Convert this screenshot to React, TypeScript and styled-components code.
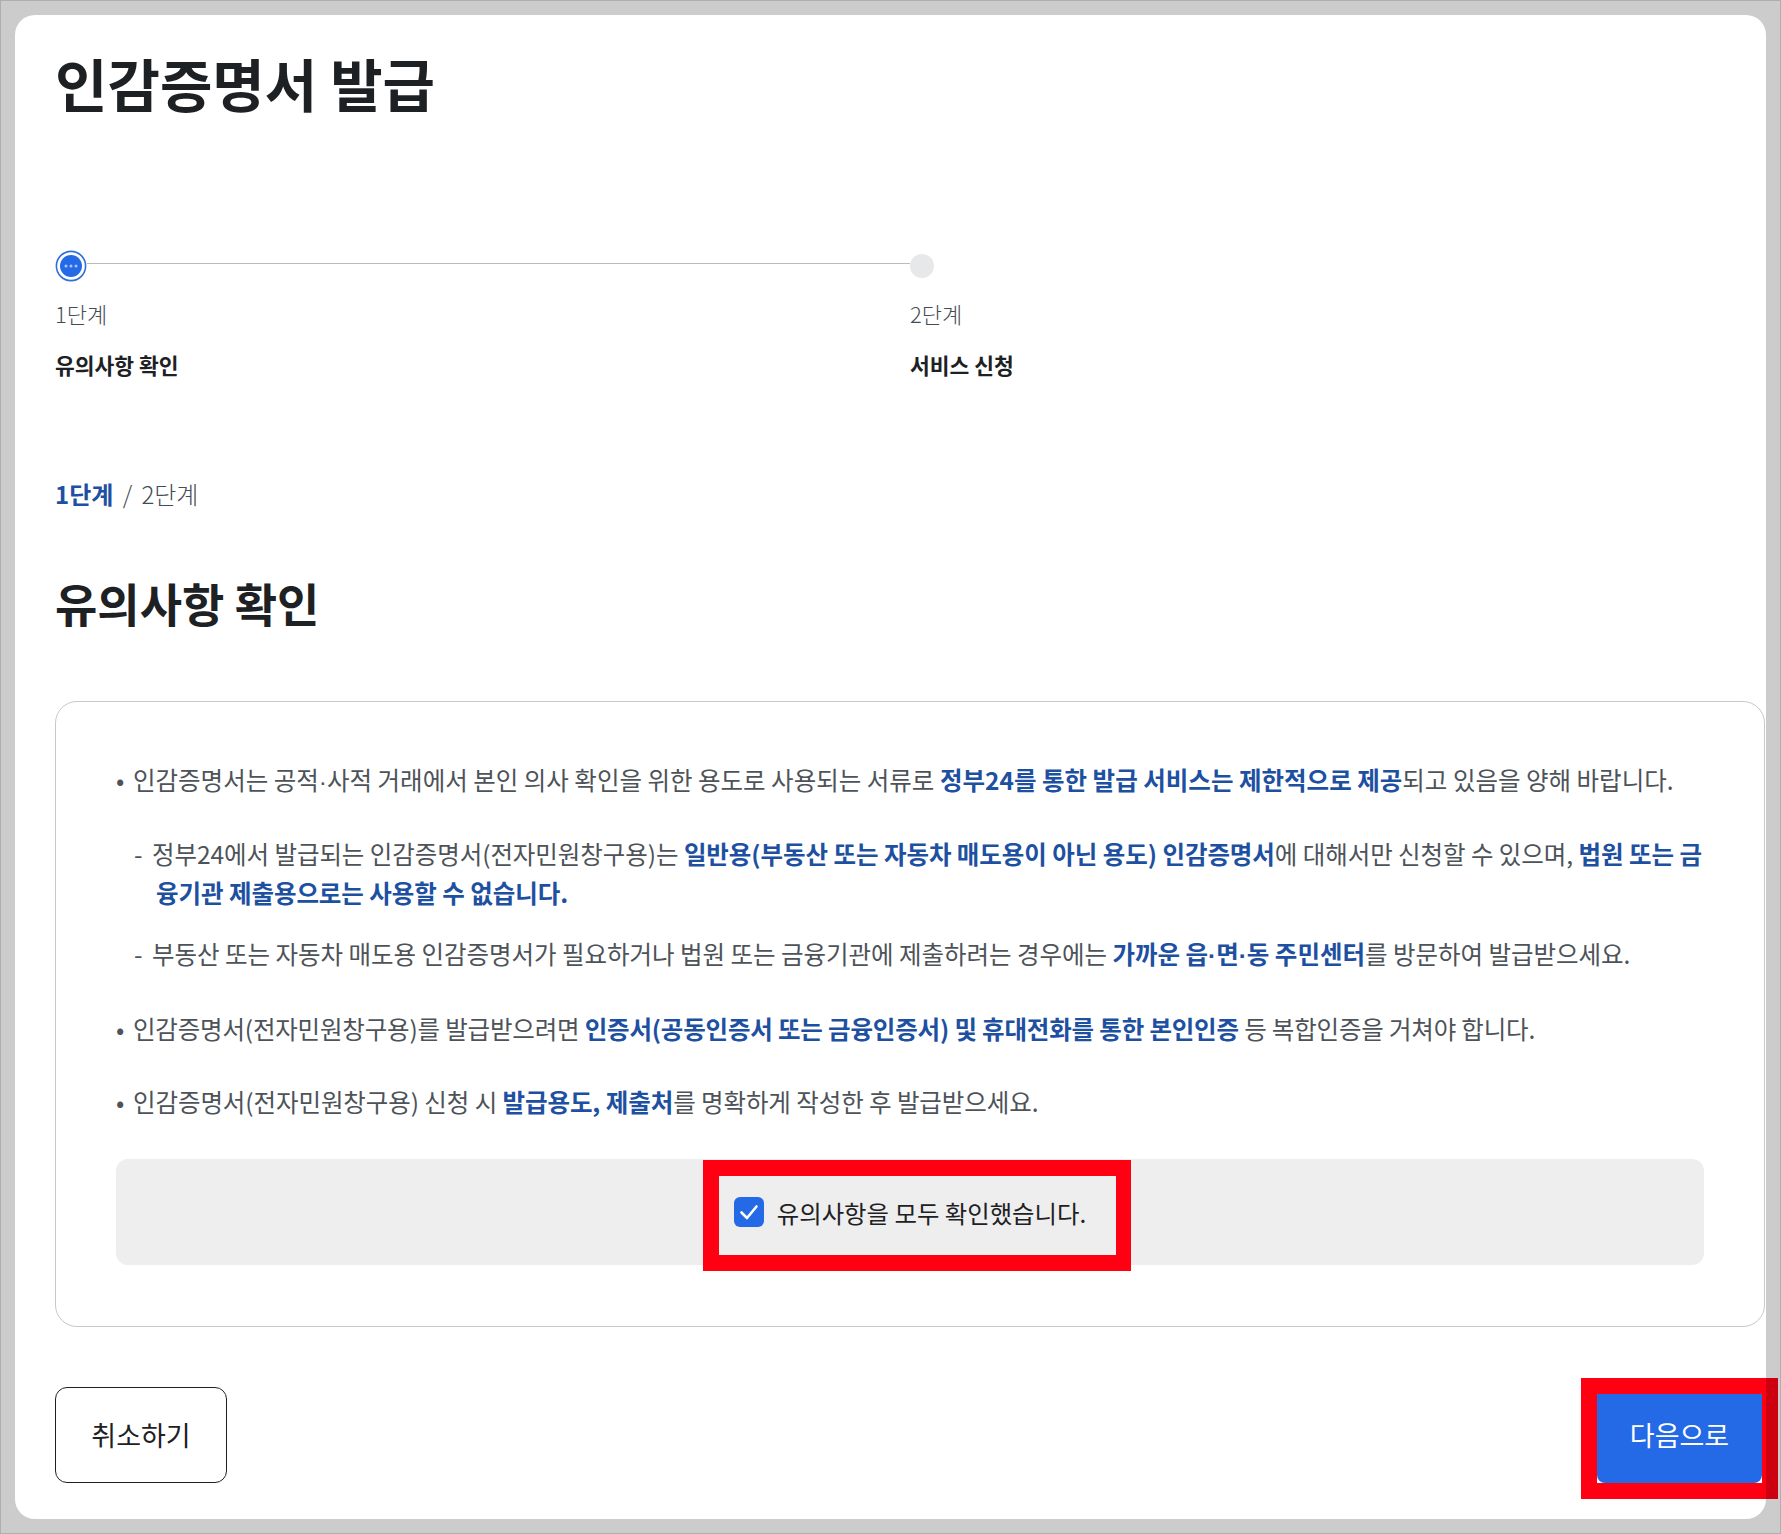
import styled, { createGlobalStyle } from 'styled-components';

const GlobalStyle = createGlobalStyle`
  html, body {
    margin: 0;
    padding: 0;
    background: #cccccc;
  }
  * {
    box-sizing: border-box;
  }
  body {
    font-family: "Noto Sans CJK KR", "Noto Sans", sans-serif;
    color: #1e2124;
  }
`;

const Page = styled.div`
  position: relative;
  width: 1781px;
  height: 1534px;
  padding: 14px;
  background: #cccccc;
  border: 1px solid #aeaeae;
  overflow: hidden;
`;

const Panel = styled.main`
  height: 1504px;
  padding: 0 0 0 40px;
  background: #ffffff;
  border-radius: 20px;
`;

const Title = styled.h1`
  margin: 0;
  padding-top: 27px;
  font-size: 57px;
  line-height: 80px;
  font-weight: 700;
`;

const Stepper = styled.ol`
  display: flex;
  margin: 128px 0 0;
  padding: 0;
  list-style: none;
`;

const Step = styled.li<{ $wide?: boolean }>`
  width: ${(p) => (p.$wide ? '855px' : '200px')};
`;

const MarkerRow = styled.div`
  display: flex;
  align-items: center;
  height: 32px;
`;

const Rail = styled.div`
  flex: 1;
  height: 1px;
  margin-top: -6px;
  background: #b9bdc2;
`;

const IdleDot = styled.span`
  width: 24px;
  height: 24px;
  border-radius: 50%;
  background: #e6e8ea;
`;

const StepNo = styled.div`
  margin-top: 15px;
  font-size: 22px;
  line-height: 32px;
  color: #464c53;
  font-weight: 300;
`;

const StepName = styled.div`
  margin-top: 20px;
  font-size: 21.5px;
  line-height: 32px;
  font-weight: 700;
`;

const Crumb = styled.div`
  margin-top: 95px;
  font-size: 24px;
  line-height: 36px;
  color: #464c53;
  font-weight: 300;
`;

const CrumbNow = styled.strong`
  color: #1e50a2;
  font-weight: 700;
`;

const CrumbSep = styled.span`
  margin: 0 4px;
`;

const Heading = styled.h2`
  margin: 58px 0 0;
  font-size: 46px;
  line-height: 64px;
  font-weight: 700;
`;

const NoticeBox = styled.section`
  width: 1710px;
  height: 626px;
  margin-top: 67px;
  padding: 58px 60px 0;
  border: 1px solid #c6c9cd;
  border-radius: 22px;
`;

const Item = styled.p<{ $sub?: boolean; $gap?: number; $track?: number }>`
  margin: 0 0 ${(p) => p.$gap ?? 34}px;
  padding-left: ${(p) => (p.$sub ? '40px' : '0')};
  text-indent: ${(p) => (p.$sub ? '-22px' : '0')};
  width: 1590px;
  font-size: 24.5px;
  line-height: 39px;
  letter-spacing: ${(p) => p.$track ?? 0}px;
  color: #4d5359;
  font-weight: 400;
`;

const Bullet = styled.span`
  display: inline-block;
  width: 17px;
  text-indent: 0;
`;

const Dash = styled.span`
  display: inline-block;
  width: 18px;
  text-indent: 0;
`;

const MidDot = styled.span`
  font-family: "Liberation Sans", sans-serif;
`;

const Em = styled.strong`
  color: #1e50a2;
  font-weight: 700;
`;

const ConfirmBar = styled.div`
  display: flex;
  justify-content: center;
  align-items: center;
  width: 1588px;
  height: 106px;
  background: #eeeeee;
  border-radius: 12px;
`;

const ConfirmMark = styled.label`
  position: relative;
  display: flex;
  align-items: center;
  gap: 13px;
  font-size: 24.4px;
  color: #1e2124;
`;

const CheckBox = styled.span`
  display: flex;
  align-items: center;
  justify-content: center;
  width: 30px;
  height: 30px;
  border-radius: 6px;
  background: #2469e6;
`;

const RedFrame = styled.span`
  position: absolute;
  left: -31px;
  top: -35px;
  width: 428px;
  height: 111px;
  border: 16px solid #ff0013;
  border-right-width: 15px;
`;

const Actions = styled.div`
  display: flex;
  justify-content: space-between;
  margin-top: 60px;
  width: 1707px;
`;

const Button = styled.button<{ $primary?: boolean }>`
  position: relative;
  width: ${(p) => (p.$primary ? '165px' : '172px')};
  height: 96px;
  padding-bottom: 3px;
  font-family: inherit;
  font-size: 27px;
  font-weight: 400;
  color: ${(p) => (p.$primary ? '#ffffff' : '#1e2124')};
  background: ${(p) => (p.$primary ? '#2469e6' : '#ffffff')};
  border: ${(p) => (p.$primary ? 'none' : '1px solid #1e2124')};
  border-radius: ${(p) => (p.$primary ? '8px' : '12px')};
`;

const NextFrame = styled.span`
  position: absolute;
  left: -16px;
  top: -9px;
  width: 197px;
  height: 121px;
  border: 16px solid #ff0013;

  /* the part of the frame that runs past the white panel, over the grey */
  &::after {
    content: '';
    position: absolute;
    top: -16px;
    bottom: -16px;
    right: -16px;
    width: 12px;
    background: #cc0010;
  }
`;

const CurrentDot = () => (
  <svg width="32" height="32" viewBox="0 0 32 32" style={{ display: 'block' }}>
    <circle cx="16" cy="16" r="14.6" fill="#fff" stroke="#2f6fdc" strokeWidth="1.6" />
    <circle cx="16" cy="16" r="11" fill="#2469e6" />
    <circle cx="11" cy="16" r="1.5" fill="#a9c6fb" />
    <circle cx="16" cy="16" r="1.5" fill="#a9c6fb" />
    <circle cx="21" cy="16" r="1.5" fill="#a9c6fb" />
  </svg>
);

const App = () => (
  <>
    <GlobalStyle />
    <Page>
      <Panel>
        <Title>인감증명서 발급</Title>
        <Stepper>
          <Step $wide>
            <MarkerRow>
              <CurrentDot />
              <Rail />
            </MarkerRow>
            <StepNo>1단계</StepNo>
            <StepName>유의사항 확인</StepName>
          </Step>
          <Step>
            <MarkerRow>
              <IdleDot />
            </MarkerRow>
            <StepNo>2단계</StepNo>
            <StepName>서비스 신청</StepName>
          </Step>
        </Stepper>
        <Crumb>
          <CrumbNow>1단계</CrumbNow> <CrumbSep>/</CrumbSep> 2단계
        </Crumb>
        <Heading>유의사항 확인</Heading>
        <NoticeBox>
          <Item $gap={33}>
            <Bullet>•</Bullet>인감증명서는 공적<MidDot>·</MidDot>사적 거래에서 본인 의사 확인을 위한 용도로 사용되는 서류로{' '}
            <Em>정부24를 통한 발급 서비스는 제한적으로 제공</Em>되고 있음을 양해 바랍니다.
          </Item>
          <Item $sub $gap={22} $track={-0.06}>
            <Dash>-</Dash>정부24에서 발급되는 인감증명서(전자민원창구용)는{' '}
            <Em>일반용(부동산 또는 자동차 매도용이 아닌 용도) 인감증명서</Em>에 대해서만 신청할 수 있으며,{' '}
            <Em>법원 또는 금<br />융기관 제출용으로는 사용할 수 없습니다.</Em>
          </Item>
          <Item $sub $track={-0.03}>
            <Dash>-</Dash>부동산 또는 자동차 매도용 인감증명서가 필요하거나 법원 또는 금융기관에 제출하려는 경우에는{' '}
            <Em>가까운 읍<MidDot>·</MidDot>면<MidDot>·</MidDot>동 주민센터</Em>를 방문하여 발급받으세요.
          </Item>
          <Item $track={-0.18}>
            <Bullet>•</Bullet>인감증명서(전자민원창구용)를 발급받으려면{' '}
            <Em>인증서(공동인증서 또는 금융인증서) 및 휴대전화를 통한 본인인증</Em> 등 복합인증을 거쳐야 합니다.
          </Item>
          <Item $track={-0.08} $gap={38}>
            <Bullet>•</Bullet>인감증명서(전자민원창구용) 신청 시 <Em>발급용도, 제출처</Em>를 명확하게 작성한 후 발급받으세요.
          </Item>
          <ConfirmBar>
            <ConfirmMark>
              <RedFrame />
              <CheckBox>
                <svg width="24" height="24" viewBox="0 0 24 24" fill="none">
                  <path d="M4.5 12.5 10 18 19.5 6.5" stroke="#fff" strokeWidth="2.6" strokeLinecap="round" strokeLinejoin="round" />
                </svg>
              </CheckBox>
              유의사항을 모두 확인했습니다.
            </ConfirmMark>
          </ConfirmBar>
        </NoticeBox>
        <Actions>
          <Button>취소하기</Button>
          <Button $primary>
            다음으로
            <NextFrame />
          </Button>
        </Actions>
      </Panel>
    </Page>
  </>
);

export default App;
